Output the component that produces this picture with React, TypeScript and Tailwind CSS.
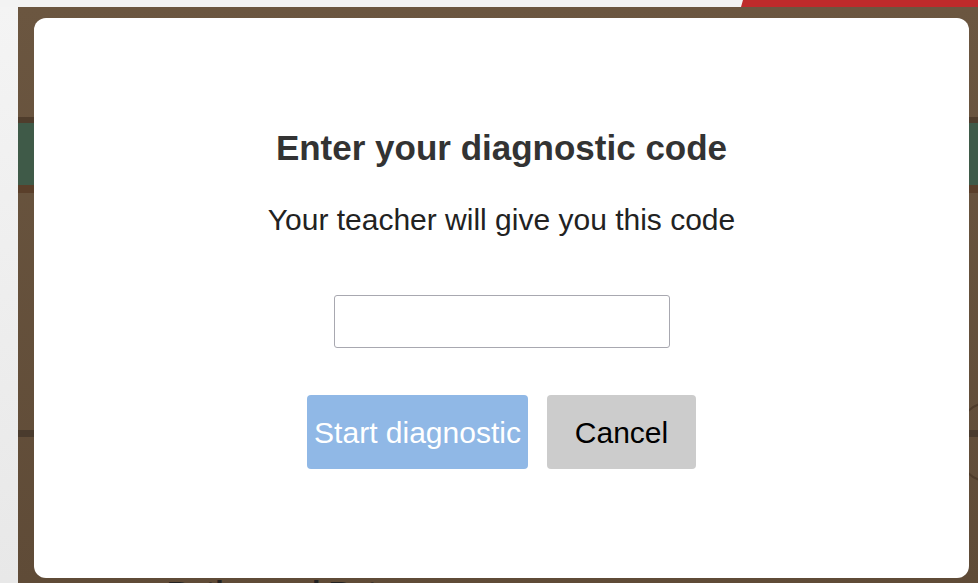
import { useState } from 'react';

// Course page sitting behind the code prompt
function CourseBackdrop() {
  return (
    <div className="flex h-full w-full flex-col">
      <div className="flex h-[7px] shrink-0">
        <div className="flex-1" />
        <div className="w-[237px] bg-[#be2b2b] [clip-path:polygon(2px_0,100%_0,100%_100%,0_100%)]" />
      </div>
      <div className="flex flex-1">
        <div className="w-[18px] shrink-0 bg-gradient-to-b from-[#f4f4f4] to-[#e8e8e8]" />
        <div className="relative flex flex-1 flex-col bg-gradient-to-b from-[#6b5640] to-[#5f4b37]">
          <div className="h-[110px]" />
          <div className="h-[6px] bg-[#4f3d2c]" />
          <div className="h-[62px] bg-[#3f5a48]" />
          <div className="h-[8px] bg-[#5a3f2a]" />
          <div className="h-[237px]" />
          <div className="h-[7px] bg-[#4a3b2d]" />
          <div className="flex-1" />
          <div className="absolute right-[-40px] top-[395px] h-[80px] w-[60px] rounded-full border-2 border-[#4f3c2b]" />
          <p className="absolute left-[149px] top-[562px] font-['Liberation_Sans',Arial,sans-serif] text-[30px] font-bold text-[#222]">
            Ratios and Rates
          </p>
        </div>
      </div>
    </div>
  );
}

function DiagnosticCodeDialog() {
  const [code, setCode] = useState('');

  return (
    <div className="absolute left-[34px] top-[18px] flex h-[560px] w-[935px] flex-col items-center rounded-[12px] bg-white font-['Liberation_Sans',Arial,sans-serif]">
      <h2 className="mt-[108px] text-[35px] font-bold leading-[44px] text-[#333]">Enter your diagnostic code</h2>
      <p className="mt-[31px] text-[30px] leading-[38px] text-[#222]">Your teacher will give you this code</p>
      <input
        value={code}
        onChange={(e) => setCode(e.target.value)}
        className="mt-[56px] h-[53px] w-[336px] rounded-[3px] border border-[#a8a8b0] bg-white px-3 text-[26px] text-[#222] outline-none"
      />
      <div className="mt-[47px] flex gap-[19px]">
        <button className="h-[74px] w-[221px] rounded-[4px] bg-[#90b8e6] text-[30px] text-white">
          Start diagnostic
        </button>
        <button className="h-[74px] w-[149px] rounded-[4px] bg-[#cccccc] text-[30px] text-black">Cancel</button>
      </div>
    </div>
  );
}

export default function App() {
  return (
    <div className="relative h-[583px] w-[978px] overflow-hidden bg-[#f3f3f3]">
      <CourseBackdrop />
      <DiagnosticCodeDialog />
    </div>
  );
}
